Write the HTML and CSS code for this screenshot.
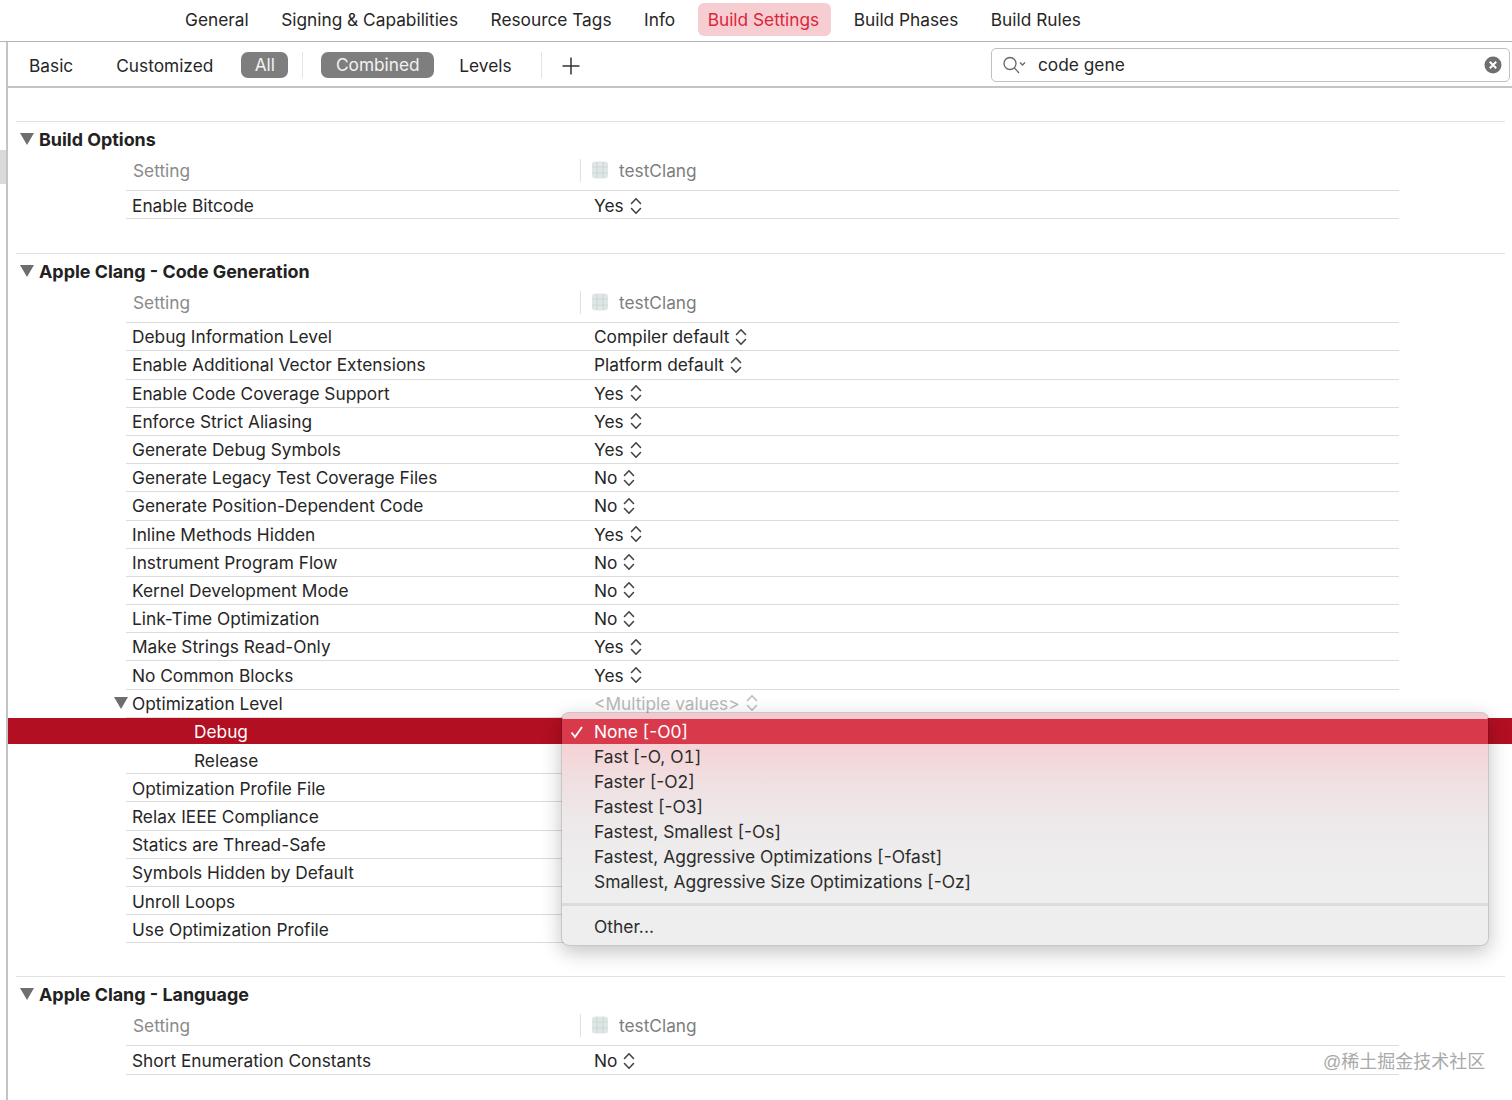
FILE: index.html
```html
<!DOCTYPE html>
<html lang="en">
<head>
<meta charset="utf-8">
<title>Build Settings</title>
<link rel="stylesheet" href="styles.css">
</head>
<body>
<svg class="defs" width="0" height="0" aria-hidden="true">
  <symbol id="updown" viewBox="0 0 12 18"><path d="M1.5 6.5 6 1.8l4.5 4.7M1.5 11.5 6 16.2l4.500-4.700" fill="none" stroke="currentColor" stroke-width="1.600" stroke-linecap="round" stroke-linejoin="round"/></symbol>
  <symbol id="tri" viewBox="0 0 14 12"><path d="M0 0h14L7 12z" fill="#6e6e6e"/></symbol>
  <symbol id="proj" viewBox="0 0 18 18"><rect x="1" y="0.500" width="16" height="17" rx="3" fill="#dfe7e6"/><path d="M1.500 6h15M1.500 12h15M6 1v16M12 1v16" stroke="#cbd6d4" stroke-width="1" fill="none"/></symbol>
</svg>
<div class="app">
  <nav class="tabs">
    <span class="tab">General</span>
    <span class="tab">Signing &amp; Capabilities</span>
    <span class="tab">Resource Tags</span>
    <span class="tab">Info</span>
    <span class="tab tab-active">Build Settings</span>
    <span class="tab">Build Phases</span>
    <span class="tab">Build Rules</span>
  </nav>
  <div class="workspace">
    <div class="gutter"><div class="gutter-mark"></div></div>
    <div class="content">
      <div class="filter">
        <span class="f-item f-basic">Basic</span>
        <span class="f-item f-custom">Customized</span>
        <span class="pill pill-all">All</span>
        <span class="vsep vsep-a"></span>
        <span class="pill pill-combined">Combined</span>
        <span class="f-item f-levels">Levels</span>
        <span class="vsep vsep-b"></span>
        <svg class="plus" width="20" height="20" viewBox="0 0 20 20"><path d="M10 1.500v17M1.500 10h17" stroke="#333" stroke-width="1.500" fill="none"/></svg>
        <div class="search">
          <svg class="search-icon" width="26" height="20" viewBox="0 0 26 20"><circle cx="8" cy="8.500" r="6" fill="none" stroke="#666" stroke-width="1.300"/><path d="m12.500 13 4.500 5" stroke="#666" stroke-width="1.300" fill="none"/><path d="m18 7.500 2.500 2.500 2.500-2.500" stroke="#666" stroke-width="1.300" fill="none"/></svg>
          <span class="search-text">code gene</span>
          <svg class="search-clear" width="18" height="18" viewBox="0 0 18 18"><circle cx="9" cy="9" r="8.500" fill="#6f6f6f"/><path d="m5.800 5.800 6.400 6.400m0-6.400-6.400 6.400" stroke="#fff" stroke-width="2" fill="none"/></svg>
        </div>
      </div>

      <section class="group group-first">
        <h2 class="group-title"><svg class="tri" width="14" height="12"><use href="#tri"/></svg>Build Options</h2>
        <div class="table">
          <div class="head"><span class="head-label">Setting</span><span class="head-sep"></span><svg class="proj" width="18" height="18"><use href="#proj"/></svg><span class="head-target">testClang</span></div>
          <div class="row row-lone"><span class="name">Enable Bitcode</span><span class="val">Yes<svg class="ud" width="12" height="18"><use href="#updown"/></svg></span></div>
        </div>
      </section>

      <section class="group">
        <h2 class="group-title"><svg class="tri" width="14" height="12"><use href="#tri"/></svg>Apple Clang - Code Generation</h2>
        <div class="table">
          <div class="head"><span class="head-label">Setting</span><span class="head-sep"></span><svg class="proj" width="18" height="18"><use href="#proj"/></svg><span class="head-target">testClang</span></div>
          <div class="row"><span class="name">Debug Information Level</span><span class="val">Compiler default<svg class="ud" width="12" height="18"><use href="#updown"/></svg></span></div>
          <div class="row"><span class="name">Enable Additional Vector Extensions</span><span class="val">Platform default<svg class="ud" width="12" height="18"><use href="#updown"/></svg></span></div>
          <div class="row"><span class="name">Enable Code Coverage Support</span><span class="val">Yes<svg class="ud" width="12" height="18"><use href="#updown"/></svg></span></div>
          <div class="row"><span class="name">Enforce Strict Aliasing</span><span class="val">Yes<svg class="ud" width="12" height="18"><use href="#updown"/></svg></span></div>
          <div class="row"><span class="name">Generate Debug Symbols</span><span class="val">Yes<svg class="ud" width="12" height="18"><use href="#updown"/></svg></span></div>
          <div class="row"><span class="name">Generate Legacy Test Coverage Files</span><span class="val">No<svg class="ud" width="12" height="18"><use href="#updown"/></svg></span></div>
          <div class="row"><span class="name">Generate Position-Dependent Code</span><span class="val">No<svg class="ud" width="12" height="18"><use href="#updown"/></svg></span></div>
          <div class="row"><span class="name">Inline Methods Hidden</span><span class="val">Yes<svg class="ud" width="12" height="18"><use href="#updown"/></svg></span></div>
          <div class="row"><span class="name">Instrument Program Flow</span><span class="val">No<svg class="ud" width="12" height="18"><use href="#updown"/></svg></span></div>
          <div class="row"><span class="name">Kernel Development Mode</span><span class="val">No<svg class="ud" width="12" height="18"><use href="#updown"/></svg></span></div>
          <div class="row"><span class="name">Link-Time Optimization</span><span class="val">No<svg class="ud" width="12" height="18"><use href="#updown"/></svg></span></div>
          <div class="row"><span class="name">Make Strings Read-Only</span><span class="val">Yes<svg class="ud" width="12" height="18"><use href="#updown"/></svg></span></div>
          <div class="row"><span class="name">No Common Blocks</span><span class="val">Yes<svg class="ud" width="12" height="18"><use href="#updown"/></svg></span></div>
          <div class="row row-parent"><span class="name"><svg class="tri tri-row" width="14" height="12"><use href="#tri"/></svg>Optimization Level</span><span class="val val-multi">&lt;Multiple values&gt;<svg class="ud" width="12" height="18"><use href="#updown"/></svg></span></div>
          <div class="row row-selected"><span class="name name-sub">Debug</span></div>
          <div class="row"><span class="name name-sub">Release</span></div>
          <div class="row"><span class="name">Optimization Profile File</span></div>
          <div class="row"><span class="name">Relax IEEE Compliance</span></div>
          <div class="row"><span class="name">Statics are Thread-Safe</span></div>
          <div class="row"><span class="name">Symbols Hidden by Default</span></div>
          <div class="row"><span class="name">Unroll Loops</span></div>
          <div class="row"><span class="name">Use Optimization Profile</span></div>
        </div>
      </section>

      <section class="group group-last">
        <h2 class="group-title"><svg class="tri" width="14" height="12"><use href="#tri"/></svg>Apple Clang - Language</h2>
        <div class="table">
          <div class="head"><span class="head-label">Setting</span><span class="head-sep"></span><svg class="proj" width="18" height="18"><use href="#proj"/></svg><span class="head-target">testClang</span></div>
          <div class="row row-lone"><span class="name">Short Enumeration Constants</span><span class="val">No<svg class="ud" width="12" height="18"><use href="#updown"/></svg></span></div>
        </div>
      </section>
    </div>
  </div>

  <div class="menu">
    <div class="menu-item menu-item-on"><svg class="check" width="14" height="14" viewBox="0 0 14 14"><path d="m1.500 7.500 3.500 4.500 7-10" fill="none" stroke="#fff" stroke-width="1.800"/></svg>None [-O0]</div>
    <div class="menu-item">Fast [-O, <span class="tnum">O1</span>]</div>
    <div class="menu-item">Faster [-O2]</div>
    <div class="menu-item">Fastest [-O3]</div>
    <div class="menu-item">Fastest, Smallest [-Os]</div>
    <div class="menu-item">Fastest, Aggressive Optimizations [-Ofast]</div>
    <div class="menu-item">Smallest, Aggressive Size Optimizations [-Oz]</div>
    <div class="menu-sep"></div>
    <div class="menu-item">Other...</div>
  </div>
  <div class="watermark">@稀土掘金技术社区</div>
</div>
</body>
</html>
```

FILE: styles.css
```css
* { box-sizing: border-box; }
html, body { margin: 0; padding: 0; background: #fff; }
body {
  font-family: Inter, "Noto Sans CJK SC", sans-serif;
  font-size: 17.3px;
  color: #262626;
  overflow: hidden;
}
.defs { position: absolute; }
.app { position: relative; width: 1512px; height: 1100px; overflow: hidden; }

.tabs {
  height: 42px;
  display: flex;
  align-items: center;
  gap: 32.5px;
  padding: 0 0 2px 185px;
  border-bottom: 1px solid #b4b4b4;
}
.tab { white-space: nowrap; }
.tab-active {
  margin: 0 -10px 0 -10px;
  padding: 0 12px 0 10px;
  height: 33px;
  line-height: 33px;
  border-radius: 6px;
  background: #f6cdd1;
  color: #d9273c;
}

.workspace { display: flex; height: 1058px; }
.gutter { width: 8px; flex: none; border-right: 2px solid #c4c4c4; padding-top: 108px; }
.gutter-mark { width: 6px; height: 34px; background: #dadada; }
.content { flex: 1; min-width: 0; }

.filter {
  height: 46px;
  display: flex;
  align-items: center;
  padding: 2px 2px 0 21px;
  border-bottom: 2px solid #c4c4c4;
}
.f-item { white-space: nowrap; }
.f-custom { margin-left: 43px; }
.pill {
  height: 26px;
  line-height: 26px;
  border-radius: 7px;
  background: #7e7e7e;
  color: #f2f2f2;
  text-align: center;
}
.pill-all { width: 47px; margin-left: 28px; }
.pill-combined { width: 113px; margin-left: 18px; }
.vsep { width: 1px; height: 26px; background: #e4e4e4; }
.vsep-a { margin-left: 14px; }
.f-levels { margin-left: 25px; }
.vsep-b { margin-left: 29px; }
.plus { margin-left: 19px; flex: none; margin-top: 2px; }
.search {
  margin-left: auto;
  width: 519px;
  height: 34px;
  margin-top: -1px;
  display: flex;
  align-items: center;
  padding: 0 7px 0 10px;
  border: 1px solid #c0c0c0;
  border-radius: 5px;
}
.search-icon { flex: none; }
.search-text { margin-left: 10px; flex: 1; }
.search-clear { flex: none; }

.group {
  margin: 34px 7px 0 8px;
  border-top: 1px solid #e2e2e2;
}
.group-first { margin-top: 33px; }
.group-last { margin-top: 33px; }
.group-title {
  height: 36px;
  margin: 0;
  padding: 0 0 1px 4px;
  display: flex;
  align-items: center;
  font-size: 17.9px;
  font-weight: 700;
  color: #222;
}
.tri { flex: none; margin-right: 5px; margin-top: -2px; }
.table { margin-left: 110px; width: 1273px; }
.head {
  height: 33px;
  display: flex;
  align-items: center;
  padding-bottom: 8px;
  border-bottom: 1px solid #dcdcdc;
  color: #8a8a8a;
}
.head-label { width: 454px; padding-left: 7px; }
.head-sep { width: 1px; height: 23px; background: #e0e0e0; }
.proj { margin: 0 10px; flex: none; }
.head-target { color: #7d7d7d; }
.row {
  height: 28.190px;
  display: flex;
  align-items: center;
  border-bottom: 1px solid #dcdcdc;
}
.row-lone { padding-top: 2px; }
.row-selected ~ .row { padding-top: 1px; }
.name { width: 468px; padding-left: 6px; white-space: nowrap; flex: none; display: flex; align-items: center; }
.name-sub { padding-left: 68px; }
.tri-row { margin-left: -18px; margin-right: 4px; margin-top: -1px; }
.val { display: flex; align-items: center; gap: 6px; white-space: nowrap; }
.ud { flex: none; color: #444; }
.val-multi { color: #b9b9b9; }
.val-multi .ud { color: #bdbdbd; }
.row-selected {
  margin: 0 -113px 0 -118px;
  padding-left: 118px;
  padding-top: 2px;
  background: #b30f22;
  background-clip: padding-box;
  border-bottom: 2px solid transparent;
  color: #fff;
}

.menu {
  position: absolute;
  left: 561px;
  top: 712px;
  width: 928px;
  height: 234px;
  padding-top: 6px;
  border-radius: 8px;
  border: 1px solid rgba(0, 0, 0, .22);
  background: linear-gradient(#f3c8ce 0, #f5d3d6 34px, #f0e0e2 70px, #eee8e9 105px, #eeeeee 160px);
  background-clip: padding-box;
  box-shadow: 0 6px 20px rgba(0, 0, 0, .24);
  color: #2c2c2c;
  font-size: 17.4px;
}
.menu-item {
  position: relative;
  height: 25px;
  line-height: 25px;
  padding-left: 32px;
  white-space: nowrap;
}
.tnum { font-variant-numeric: tabular-nums; }
.menu-item-on { background: #d93a4b; color: #fff; }
.check { position: absolute; left: 8px; top: 6px; }
.menu-sep { height: 3px; margin: 9px 0 8px; background: #dcdcdc; }

.watermark {
  position: absolute;
  left: 1323px;
  top: 1049px;
  font-size: 18px;
  line-height: 26px;
  color: #a9a9a9;
  white-space: nowrap;
  font-family: "Liberation Sans", "Noto Sans CJK SC", sans-serif;
}
```
